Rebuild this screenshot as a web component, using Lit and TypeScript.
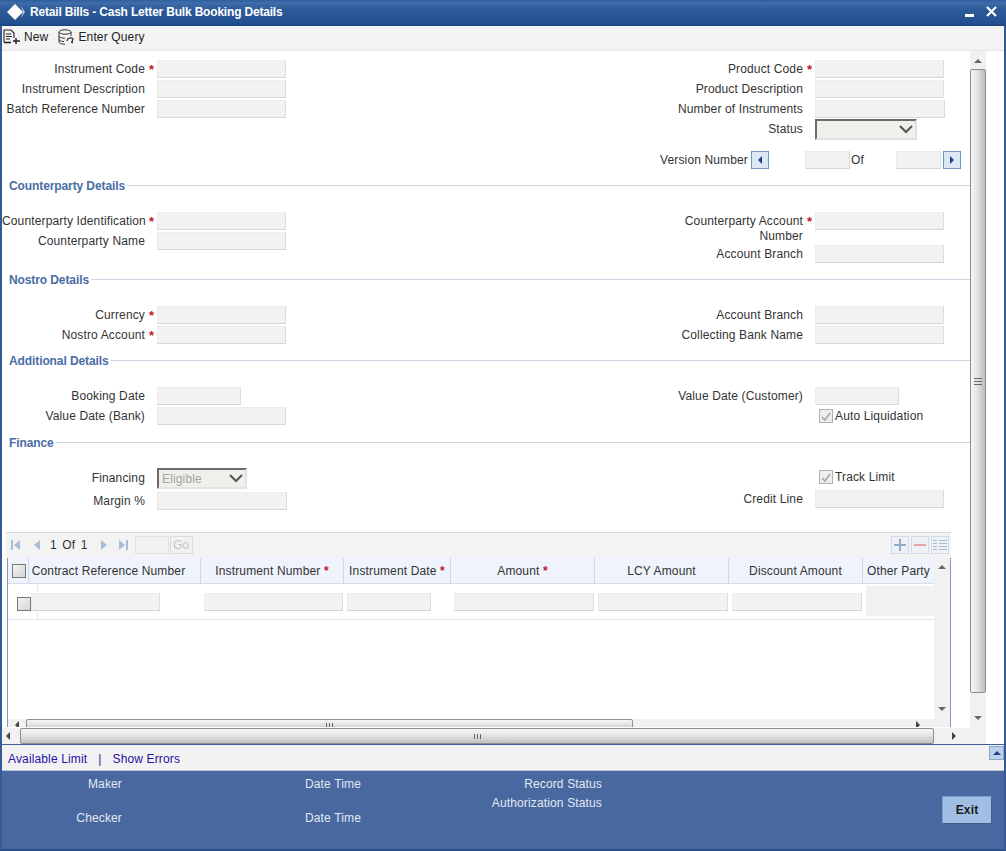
import { LitElement, html, css } from "lit";
import { customElement } from "lit/decorators.js";

const tri = (dir: string, color = "#444") => {
  const p: Record<string, string> = { u: "0,4 4,0 8,4", d: "0,0 8,0 4,4", l: "4,0 4,8 0,4", r: "0,0 0,8 4,4" };
  const w = dir === "u" || dir === "d" ? 8 : 4;
  const h = dir === "u" || dir === "d" ? 4 : 8;
  return html`<svg width=${w} height=${h} viewBox="0 0 ${w} ${h}"><polygon points=${p[dir]} fill=${color}></polygon></svg>`;
};

const grip = (vertical: boolean) => html`<span class=${vertical ? "grip gv" : "grip gh"}></span>`;

@customElement("app-root")
export class AppRoot extends LitElement {
  static styles = css`
    :host { display: block; width: 1006px; height: 851px; font: 12px "Liberation Sans", Arial, sans-serif; letter-spacing: 0.14px; color: #333; overflow: hidden; }
    * { box-sizing: border-box; }
    svg { display: block; flex: none; }
    .win { width: 1006px; height: 851px; background: #fff; border-left: 2px solid #345a96; border-right: 2px solid #345a96; border-bottom: 2px solid #2d5089; display: flex; flex-direction: column; }
    .title { height: 26px; margin: 0 -2px; padding: 0 9px 2px 7px; background: linear-gradient(#2f5f9e 0, #3f6cab 3px, #2c5a99 10px, #224f8f 24px, #173d75 26px); display: flex; align-items: center; color: #fff; font-weight: bold; letter-spacing: -0.19px; flex: none; }
    .title span { margin-left: 5px; }
    .title .sp { flex: 1; }
    .toolbar { height: 25px; background: #f3f3f3; border-bottom: 1px solid #e6e6e6; display: flex; align-items: center; flex: none; padding: 0 0 2px 1px; color: #222; }
    .toolbar .t { margin-left: 3px; }
    .toolbar svg.q { margin-left: 10px; }
    .main { height: 693px; flex: none; display: flex; }
    .left { width: 968px; flex: none; display: flex; flex-direction: column; }
    .form { height: 677px; flex: none; padding-top: 9px; overflow: hidden; }
    .cols { display: grid; grid-template-columns: 656px 1fr; }
    .sec { padding-top: 20px; }
    .field { display: grid; grid-template-columns: 143px 12px auto; height: 20px; align-items: start; justify-content: start; }
    .right .field { grid-template-columns: 145px 12px auto; }
    .lab { text-align: right; line-height: 19px; white-space: nowrap; color: #333; }
    .star { color: #c8141e; font-size: 13px; font-weight: bold; padding-left: 4px; line-height: 19px; }
    .in { display: block; height: 18px; width: 129px; background: #f2f2f2; border: 1px solid #ececec; border-right-color: #dcdcdc; border-bottom-color: #d6d6d6; }
    .w130 { width: 130px; }
    .w84 { width: 84px; }
    .w45 { width: 45px; }
    .sel { display: flex; align-items: center; justify-content: space-between; height: 21px; background: #f1efe9; border: 2px solid #e2e2e2; border-top-color: #6b6b6b; border-left-color: #6b6b6b; padding: 0 2px 0 3px; color: #a3a3a3; }
    .sel.status { width: 102px; margin-top: -1px; }
    .sel.fin { width: 90px; }
    .ver { display: flex; align-items: center; height: 18px; margin-top: 11px; margin-left: 2px; }
    .ver .vb { margin-left: 2px; }
    .ver .vb.first { margin-left: 3px; }
    .vb { width: 18px; height: 18px; background: #dce8f5; border: 1px solid #6f94be; display: flex; align-items: center; justify-content: center; }
    .ver .a { margin-left: 36px; }
    .ver .of { width: 46px; padding-left: 1px; }
    .head { display: flex; align-items: center; height: 14px; padding-top: 2px; color: #4a6ca6; font-weight: bold; letter-spacing: -0.1px; margin-left: 7px; }
    .head i { flex: 1; height: 1px; margin-top: -2px; background: #cbd6e2; margin-left: 2px; margin-right: -2px; }
    .multi { height: 33px; }
    .multi .lab { white-space: normal; line-height: 15px; padding-top: 2px; width: 145px; }
    .chk { display: inline-flex; width: 14px; height: 14px; border: 1px solid #b0b0b0; background: #eeeeee; align-items: center; justify-content: center; }
    .cl { display: flex; align-items: center; gap: 2px; height: 18px; margin-left: 161px; color: #333; }
    .cl.track { margin-bottom: 4px; }
    .grid { margin: 20px 0 0 4px; width: 945px; }
    .gbar { height: 26px; background: #f3f3f3; border-top: 1px solid #ced8e2; display: flex; align-items: center; padding: 0 2px 2px 5px; color: #333; }
    .gbar .pg { margin: 0 13px 0 10px; word-spacing: 2px; }
    .gbar .ginp { width: 34px; height: 18px; background: #f2f2f2; border: 1px solid #e2e2e2; margin-left: 6px; }
    .gbar .go { width: 23px; height: 18px; margin-left: 1px; background: #f2f2f2; border: 1px solid #dcdcdc; color: #c4c4c4; text-align: center; line-height: 16px; }
    .gbar .sp { flex: 1; }
    .ib { width: 18px; height: 18px; border: 1px solid #d0dae6; background: #eef1f5; margin-left: 2px; display: flex; align-items: center; justify-content: center; }
    .gbody { height: 169px; margin-left: 1px; border-left: 1px solid #7d9cc0; border-right: 1px solid #7d9cc0; display: flex; position: relative; }
    .tb { width: 926px; flex: none; display: flex; flex-direction: column; }
    .thead { display: flex; height: 26px; background: #eef3fc; border-bottom: 1px solid #d3deeb; flex: none; }
    .th { height: 25px; line-height: 27px; text-align: center; border-right: 1px solid #ccd8e8; white-space: nowrap; overflow: hidden; color: #333; }
    .th.c0 { width: 21px; padding-left: 4px; display: flex; align-items: center; line-height: normal; }
    .th.c1 { padding-right: 12px; }
    .th.last { border-right: none; }
    .th b { color: #c8141e; }
    .tbox { width: 14px; height: 14px; border: 1px solid #777; background: linear-gradient(135deg, #f4f4f4, #d4d4d4); display: block; flex: none; }
    .tr { display: flex; height: 36px; border-bottom: 1px solid #dfe6ef; flex: none; position: relative; padding-top: 9px; }
    .tr::before { content: ""; position: absolute; left: 29px; top: 0; bottom: 0; width: 1px; background: #e3eaf3; }
    .tr .tbox { margin: 4px 0 0 9px; }
    .tr .in { position: relative; }
    .tr .blk { width: 68px; height: 30px; background: #f2f2f2; margin: -7px 0 0 4px; }
    .tfill { flex: 1; }
    .sbh { display: flex; align-items: center; background: #f1f1f1; flex: none; }
    .sbh.inner { height: 8px; overflow: hidden; align-items: flex-start; }
    .thumbh { border: 1px solid #8e8e8e; border-radius: 2px; background: linear-gradient(#f6f6f6, #e6e6e6 40%, #c2c2c2); display: flex; align-items: center; justify-content: center; }
    .sbv { width: 16px; flex: none; background: #f1f1f1; display: flex; flex-direction: column; align-items: center; }
    .thumbv { width: 16px; border: 1px solid #8e8e8e; border-radius: 2px; background: linear-gradient(90deg, #f6f6f6, #e6e6e6 40%, #bcbcbc); display: flex; align-items: center; justify-content: center; flex: none; }
    .grip { display: block; }
    .gh { width: 7px; height: 5px; background: repeating-linear-gradient(90deg, #666 0 1px, transparent 1px 3px); }
    .gv { width: 8px; height: 7px; background: repeating-linear-gradient(#666 0 1px, transparent 1px 3px); }
    .inner-v { height: 169px; justify-content: flex-start; }
    .mainv { height: 693px; }
    .white { flex: 1; background: #fff; }
    .links { height: 27px; flex: none; background: #f2f2f2; border-top: 1px solid #3e6299; border-bottom: 1px solid #b9c7dc; display: flex; align-items: center; padding: 2px 0 0 6px; color: #2413a5; position: relative; }
    .links .sep { margin: 0 11px 0 11px; }
    .upb { position: absolute; right: 0; top: 1px; width: 15px; height: 14px; background: #bcd0ea; border: 1px solid #8aa6cc; display: flex; align-items: center; justify-content: center; }
    .foot { flex: 1; background: #49689f; color: #e2e8f2; display: flex; position: relative; }
    .fc { display: flex; flex-direction: column; flex: none; }
    .fc div { white-space: nowrap; line-height: 14px; }
    .f1 { width: 120px; text-align: right; padding-top: 6px; gap: 20px; }
    .f2 { width: 100px; margin-left: 183px; padding-top: 6px; gap: 20px; }
    .f3 { width: 197px; text-align: right; padding-top: 6px; gap: 5px; }
    .exit { margin: 25px 12px 0 auto; width: 50px; height: 28px; background: #a1bee5; border: 1px solid #3e5d90; border-top-color: #7f9dc6; border-left-color: #7f9dc6; color: #1b1b1b; font-weight: bold; display: flex; align-items: center; justify-content: center; flex: none; }
  `;

  private field(label: string, opts: { star?: boolean; cls?: string } = {}) {
    return html`<div class="field"><span class="lab">${label}</span><span class="star">${opts.star ? "*" : ""}</span><span class="in ${opts.cls ?? ""}"></span></div>`;
  }

  private check() {
    return html`<span class="chk"><svg width="10" height="9" viewBox="0 0 10 9"><path d="M1 5l3 3 5-7" fill="none" stroke="#a4a4a4" stroke-width="1.5"></path></svg></span>`;
  }

  private chev() {
    return html`<svg width="14" height="9" viewBox="0 0 14 9"><path d="M1 1l6 6 6-6" fill="none" stroke="#555" stroke-width="2"></path></svg>`;
  }

  render() {
    return html`
      <div class="win">
        <div class="title">
          <svg width="18" height="16" viewBox="0 0 18 16"><polygon points="8,0 16,8 8,16 0,8" fill="#fff"></polygon><polygon points="14,2 18,8 14,14 16,8" fill="#b8cbe4"></polygon></svg>
          <span>Retail Bills - Cash Letter Bulk Booking Details</span>
          <i class="sp"></i>
          <svg width="32" height="12" viewBox="0 0 32 12"><rect x="0" y="8" width="9" height="3" fill="#fff"></rect><path d="M22 1l9 9M31 1l-9 9" stroke="#fff" stroke-width="2.2" fill="none"></path></svg>
        </div>
        <div class="toolbar">
          <svg width="18" height="16" viewBox="0 0 18 16"><path d="M1 13V1h7l3 3v5M3 5h5M3 7.500h6M3 10h4" fill="none" stroke="#222" stroke-width="1.100"></path><path d="M1 13.500h7M13 9v6M10 12h7" fill="none" stroke="#222" stroke-width="1.500"></path></svg>
          <span class="t">New</span>
          <svg class="q" width="17" height="16" viewBox="0 0 17 16"><ellipse cx="7" cy="3" rx="6" ry="2.200" fill="none" stroke="#333"></ellipse><path d="M1 3v10c0 1.500 3 2.200 6 2.200M13 3v4M1 7c0 1.500 3 2.200 6 2.200M1 10.500c0 1.500 3 2 5 2" fill="none" stroke="#333"></path><path d="M9 12c0-3 4-4 6-2l-1 3M15 14l-2-1" fill="none" stroke="#333" stroke-width="1.300"></path></svg>
          <span class="t">Enter Query</span>
        </div>
        <div class="main">
          <div class="left">
            <div class="form">
              <div class="cols">
                <div>
                  ${this.field("Instrument Code", { star: true })}
                  ${this.field("Instrument Description")}
                  ${this.field("Batch Reference Number")}
                </div>
                <div class="right">
                  ${this.field("Product Code", { star: true })}
                  ${this.field("Product Description")}
                  ${this.field("Number of Instruments", { cls: "w130" })}
                  <div class="field"><span class="lab">Status</span><span></span><div class="sel status"><span></span>${this.chev()}</div></div>
                  <div class="ver">
                    <span>Version Number</span>
                    <span class="vb first">${tri("l", "#17408a")}</span>
                    <span class="in w45 a"></span>
                    <span class="of">Of</span>
                    <span class="in w45"></span>
                    <span class="vb">${tri("r", "#17408a")}</span>
                  </div>
                </div>
              </div>
              <div class="head" style="margin-top:9px">Counterparty Details<i></i></div>
              <div class="cols sec">
                <div>
                  ${this.field("Counterparty Identification", { star: true })}
                  ${this.field("Counterparty Name")}
                </div>
                <div class="right">
                  <div class="field multi"><span class="lab">Counterparty Account Number</span><span class="star">*</span><span class="in"></span></div>
                  ${this.field("Account Branch")}
                </div>
              </div>
              <div class="head" style="margin-top:7px">Nostro Details<i></i></div>
              <div class="cols sec">
                <div>
                  ${this.field("Currency", { star: true })}
                  ${this.field("Nostro Account", { star: true })}
                </div>
                <div class="right">
                  ${this.field("Account Branch")}
                  ${this.field("Collecting Bank Name")}
                </div>
              </div>
              <div class="head" style="margin-top:7px">Additional Details<i></i></div>
              <div class="cols sec">
                <div>
                  ${this.field("Booking Date", { cls: "w84" })}
                  ${this.field("Value Date (Bank)")}
                </div>
                <div class="right">
                  ${this.field("Value Date (Customer)", { cls: "w84" })}
                  <div class="cl">${this.check()}<span>Auto Liquidation</span></div>
                </div>
              </div>
              <div class="head" style="margin-top:8px">Finance<i></i></div>
              <div class="cols sec" style="padding-top:19px">
                <div>
                  <div class="field" style="height:24px"><span class="lab" style="line-height:21px">Financing</span><span></span><div class="sel fin"><span>Eligible</span>${this.chev()}</div></div>
                  ${this.field("Margin %", { cls: "w130" })}
                </div>
                <div class="right">
                  <div class="cl track">${this.check()}<span>Track Limit</span></div>
                  ${this.field("Credit Line")}
                </div>
              </div>
              <div class="grid">
                <div class="gbar">
                  <svg width="10" height="10" viewBox="0 0 10 10"><rect x="0" y="0" width="2" height="10" fill="#a9bdd4"></rect><polygon points="9,0 9,10 3,5" fill="#a9bdd4"></polygon></svg>
                  <svg style="margin-left:13px" width="6" height="10" viewBox="0 0 6 10"><polygon points="6,0 6,10 0,5" fill="#a9bdd4"></polygon></svg>
                  <span class="pg">1 Of 1</span>
                  <svg width="6" height="10" viewBox="0 0 6 10"><polygon points="0,0 0,10 6,5" fill="#a9bdd4"></polygon></svg>
                  <svg style="margin-left:12px" width="10" height="10" viewBox="0 0 10 10"><polygon points="0,0 0,10 6,5" fill="#a9bdd4"></polygon><rect x="7" y="0" width="2" height="10" fill="#a9bdd4"></rect></svg>
                  <span class="ginp"></span>
                  <span class="go">Go</span>
                  <i class="sp"></i>
                  <span class="ib"><svg width="12" height="12" viewBox="0 0 12 12"><path d="M6 0v12M0 6h12" stroke="#8fa9c9" stroke-width="2"></path></svg></span>
                  <span class="ib"><svg width="12" height="4" viewBox="0 0 12 4"><path d="M0 2h12" stroke="#e3a8a8" stroke-width="2"></path></svg></span>
                  <span class="ib"><svg width="14" height="12" viewBox="0 0 14 12"><path d="M0 1.500h4M6 1.500h8M0 4.500h4M6 4.500h8M0 7.500h4M6 7.500h8M0 10.500h4M6 10.500h8" stroke="#a6b8cf"></path></svg></span>
                </div>
                <div class="gbody">
                  <div class="tb">
                    <div class="thead">
                      <div class="th c0"><span class="tbox"></span></div>
                      <div class="th c1" style="width:172px">Contract Reference Number</div>
                      <div class="th" style="width:143px">Instrument Number <b>*</b></div>
                      <div class="th" style="width:107px">Instrument Date <b>*</b></div>
                      <div class="th" style="width:144px">Amount <b>*</b></div>
                      <div class="th" style="width:134px">LCY Amount</div>
                      <div class="th" style="width:134px">Discount Amount</div>
                      <div class="th last" style="width:71px">Other Party</div>
                    </div>
                    <div class="tr">
                      <span class="tbox"></span>
                      <span class="in"></span>
                      <span class="in" style="width:139px;margin-left:44px"></span>
                      <span class="in" style="width:84px;margin-left:4px"></span>
                      <span class="in" style="width:140px;margin-left:23px"></span>
                      <span class="in" style="width:130px;margin-left:4px"></span>
                      <span class="in" style="width:130px;margin-left:4px"></span>
                      <span class="blk"></span>
                    </div>
                    <div class="tfill"></div>
                    <div class="sbh inner">
                      <span style="width:18px;padding:2px 0 0 7px;display:block">${tri("l")}</span>
                      <div class="thumbh" style="width:607px;height:12px">${grip(false)}</div>
                      <i style="flex:1"></i>
                      <span style="width:18px;padding-top:2px;display:block">${tri("r")}</span>
                    </div>
                  </div>
                  <div class="sbv inner-v">
                    <span style="margin-top:7px;display:block">${tri("u", "#666")}</span>
                    <i style="flex:1"></i>
                    <span style="margin-bottom:16px;display:block">${tri("d", "#666")}</span>
                  </div>
                </div>
              </div>
            </div>
            <div class="sbh" style="height:16px">
              <span style="width:18px;padding-left:4px;display:block">${tri("l")}</span>
              <div class="thumbh" style="width:914px;height:16px">${grip(false)}</div>
              <i style="flex:1"></i>
              <span style="width:23px;padding-left:5px;display:block">${tri("r")}</span>
            </div>
          </div>
          <div class="sbv mainv">
            <span style="margin-top:8px;display:block">${tri("u", "#666")}</span>
            <div class="thumbv" style="height:624px;margin-top:6px">${grip(true)}</div>
            <i style="flex:1"></i>
            <span style="margin-bottom:24px;display:block">${tri("d", "#666")}</span>
          </div>
          <div class="white"></div>
        </div>
        <div class="links">
          <span>Available Limit</span><span class="sep">|</span><span>Show Errors</span>
          <span class="upb">${tri("u", "#1c4587")}</span>
        </div>
        <div class="foot">
          <div class="fc f1"><div>Maker</div><div>Checker</div></div>
          <div class="fc f2"><div>Date Time</div><div>Date Time</div></div>
          <div class="fc f3"><div>Record Status</div><div>Authorization Status</div></div>
          <div class="exit">Exit</div>
        </div>
      </div>
    `;
  }
}
